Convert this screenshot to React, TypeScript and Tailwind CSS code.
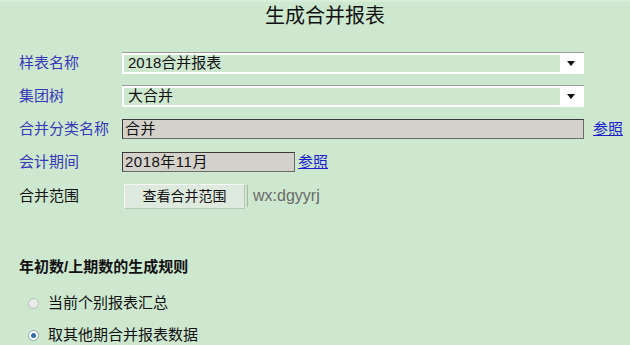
import React from 'react';

const font = { fontFamily: '"Liberation Sans", "Noto Sans CJK SC", sans-serif' };

const Label: React.FC<{ text: string; blue?: boolean }> = ({ text, blue = true }) => (
  <div className={`w-[103px] shrink-0 text-[15px] ${blue ? 'text-[#3838b8]' : 'text-[#111]'}`}>{text}</div>
);

const SelectBox: React.FC<{ value: string }> = ({ value }) => (
  <div className="flex h-[22px] w-[462px] border-t border-[#9a9a9a] bg-white p-[2px]">
    <div className="flex flex-1 items-center bg-[#cde8cf] pl-[4px] text-[15px] text-[#111]">{value}</div>
    <div className="flex w-[22px] items-center justify-center">
      <svg width="8" height="5" viewBox="0 0 8 5">
        <path d="M0 0 L8 0 L4 5 Z" fill="#111" />
      </svg>
    </div>
  </div>
);

const ReadInput: React.FC<{ value: string; width: string }> = ({ value, width }) => (
  <div
    className={`flex h-[20px] ${width} items-center border border-[#3a3a3a] border-b-[#6a6a6a] border-r-[#6a6a6a] bg-[#d4d1cb] pl-[2px] text-[15px] tracking-[0.5px] text-[#111]`}
  >
    {value}
  </div>
);

const Link: React.FC<{ text: string }> = ({ text }) => (
  <a href="#" className="text-[15px] text-[#1c1ccf] underline">
    {text}
  </a>
);

const Radio: React.FC<{ checked?: boolean; text: string }> = ({ checked, text }) => (
  <div className="flex h-[32px] items-center pl-[28px]">
    <div
      className={`flex h-[11px] w-[11px] items-center justify-center rounded-full border ${
        checked ? 'border-[#8aa0b8] bg-white' : 'border-[#b4bcb4] bg-[#e8ece8]'
      }`}
    >
      {checked && <div className="h-[5px] w-[5px] rounded-full bg-[#2d6cb0]" />}
    </div>
    <span className="ml-[9px] text-[15px] text-[#111]">{text}</span>
  </div>
);

export default function App() {
  return (
    <div className="h-[345px] w-[630px] overflow-hidden bg-[#cde8cf]" style={font}>
      <div className="h-[2px] bg-[#d8eed9]" />
      <div className="flex h-[28px] items-center justify-center pl-[20px] text-[20px] text-[#111]">生成合并报表</div>

      <div className="mt-[22px] flex flex-col pl-[19px]">
        <div className="flex h-[22px] items-center">
          <Label text="样表名称" />
          <SelectBox value="2018合并报表" />
        </div>
        <div className="mt-[11px] flex h-[22px] items-center">
          <Label text="集团树" />
          <SelectBox value="大合并" />
        </div>
        <div className="mt-[12px] flex h-[20px] items-center">
          <Label text="合并分类名称" />
          <ReadInput value="合并" width="w-[462px]" />
          <div className="ml-[9px]">
            <Link text="参照" />
          </div>
        </div>
        <div className="mt-[13px] flex h-[20px] items-center">
          <Label text="会计期间" />
          <ReadInput value="2018年11月" width="w-[173px]" />
          <div className="ml-[3px]">
            <Link text="参照" />
          </div>
        </div>
        <div className="mt-[11px] flex h-[26px] items-center">
          <Label text="合并范围" blue={false} />
          <button className="ml-[2px] h-[25px] w-[121px] border border-[#f4f8f4] border-b-[#b8c8b8] border-r-[#b8c8b8] bg-[#dfeadf] text-[14px] text-[#111]">
            查看合并范围
          </button>
          <div className="ml-[2px] h-[22px] w-px bg-[#a8b8a8]" />
          <span className="ml-[5px] text-[16px] text-[#6a6a6a]">wx:dgyyrj</span>
        </div>
      </div>

      <div className="mt-[47px] pl-[19px] text-[15px] font-bold text-[#111]">年初数/上期数的生成规则</div>
      <div className="mt-[9px] flex flex-col">
        <Radio text="当前个别报表汇总" />
        <Radio checked text="取其他期合并报表数据" />
      </div>
    </div>
  );
}
